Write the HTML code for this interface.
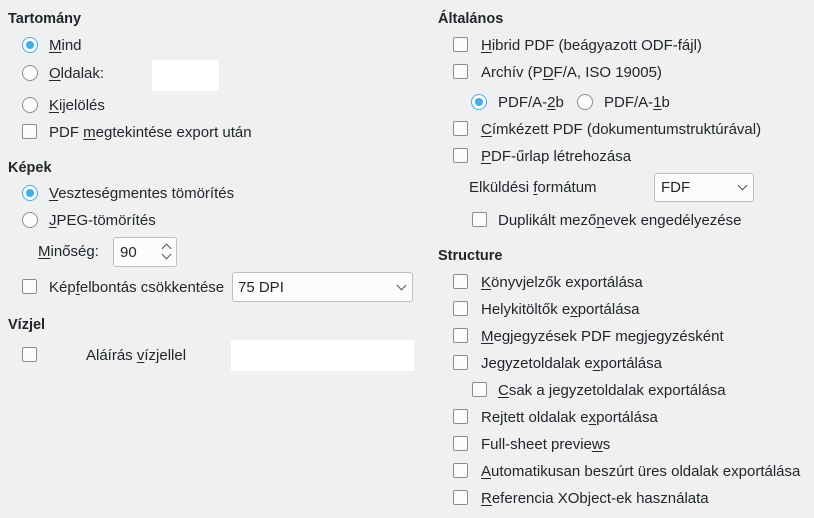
<!DOCTYPE html>
<html><head><meta charset="utf-8"><style>
body{margin:0;width:814px;height:518px;background:#eff0f1;font-family:"Liberation Sans","DejaVu Sans",sans-serif;font-size:15px;color:#232629;position:relative;overflow:hidden}
.a{position:absolute;white-space:nowrap;line-height:18px;margin-top:1px}
.h{font-weight:bold;font-size:14.5px}
u{text-decoration:underline;text-underline-offset:2px}
.cb{position:absolute;width:13px;height:13px;border:1px solid #8a8d90;border-radius:2px;background:#fcfcfc}
.rb{position:absolute;width:14px;height:14px;border:1px solid #8a8d90;border-radius:50%;background:#fcfcfc}
.rb.on{border-color:#3daee9;background:#fff}
.rb.on::after{content:"";position:absolute;left:3px;top:3px;width:8px;height:8px;border-radius:50%;background:#3daee9}
.box{position:absolute;background:#fff}
.combo{position:absolute;background:#fcfcfc;border:1px solid #bcbebf;border-radius:3px;box-sizing:border-box}
.chev{position:absolute;width:6px;height:6px;border-right:1.3px solid #555;border-bottom:1.3px solid #555;transform:rotate(45deg)}
</style></head><body>
<div class="a h" style="left:8px;top:9px">Tartomány</div>
<div class="rb on" style="left:22px;top:37px"></div><div class="a" style="left:49px;top:36px"><u>M</u>ind</div>
<div class="rb" style="left:22px;top:65px"></div><div class="a" style="left:49px;top:64px"><u>O</u>ldalak:</div>
<div class="box" style="left:152px;top:60px;width:67px;height:31px"></div>
<div class="rb" style="left:22px;top:97px"></div><div class="a" style="left:49px;top:96px"><u>K</u>ijelölés</div>
<div class="cb" style="left:22px;top:124px"></div><div class="a" style="left:49px;top:123px">PDF <u>m</u>egtekintése export után</div>

<div class="a h" style="left:8px;top:158px">Képek</div>
<div class="rb on" style="left:22px;top:185px"></div><div class="a" style="left:49px;top:184px"><u>V</u>eszteségmentes tömörítés</div>
<div class="rb" style="left:22px;top:212px"></div><div class="a" style="left:49px;top:211px"><u>J</u>PEG-tömörítés</div>
<div class="a" style="left:38px;top:242px"><u>M</u>inőség:</div>
<div class="combo" style="left:113px;top:237px;width:64px;height:30px"></div>
<div class="a" style="left:120px;top:243px">90</div>
<div class="chev" style="left:163px;top:245px;transform:rotate(225deg)"></div>
<div class="chev" style="left:163px;top:251px"></div>
<div class="cb" style="left:22px;top:279px"></div><div class="a" style="left:49px;top:278px">Kép<u>f</u>elbontás csökkentése</div>
<div class="combo" style="left:232px;top:272px;width:181px;height:30px"></div>
<div class="a" style="left:238px;top:278px">75 DPI</div>
<div class="chev" style="left:398px;top:282px"></div>

<div class="a h" style="left:8px;top:315px">Vízjel</div>
<div class="cb" style="left:22px;top:347px"></div><div class="a" style="left:86px;top:346px">Aláírás <u>v</u>ízjellel</div>
<div class="box" style="left:231px;top:340px;width:183px;height:31px"></div>

<div class="a h" style="left:438px;top:9px">Általános</div>
<div class="cb" style="left:453px;top:37px"></div><div class="a" style="left:481px;top:36px"><u>H</u>ibrid PDF (beágyazott ODF-fájl)</div>
<div class="cb" style="left:453px;top:64px"></div><div class="a" style="left:481px;top:63px">Archív (P<u>D</u>F/A, ISO 19005)</div>
<div class="rb on" style="left:471px;top:94px"></div><div class="a" style="left:498px;top:93px">PDF/A-<u>2</u>b</div>
<div class="rb" style="left:577px;top:94px"></div><div class="a" style="left:604px;top:93px">PDF/A-<u>1</u>b</div>
<div class="cb" style="left:453px;top:121px"></div><div class="a" style="left:481px;top:120px"><u>C</u>ímkézett PDF (dokumentumstruktúrával)</div>
<div class="cb" style="left:453px;top:148px"></div><div class="a" style="left:481px;top:147px"><u>P</u>DF-űrlap létrehozása</div>
<div class="a" style="left:469px;top:178px">Elküldési <u>f</u>ormátum</div>
<div class="combo" style="left:654px;top:173px;width:100px;height:29px"></div>
<div class="a" style="left:661px;top:178px">FDF</div>
<div class="chev" style="left:739px;top:182px"></div>
<div class="cb" style="left:472px;top:212px"></div><div class="a" style="left:498px;top:211px">Duplikált mező<u>n</u>evek engedélyezése</div>

<div class="a h" style="left:438px;top:246px">Structure</div>
<div class="cb" style="left:453px;top:274px"></div><div class="a" style="left:481px;top:273px"><u>K</u>önyvjelzők exportálása</div>
<div class="cb" style="left:453px;top:301px"></div><div class="a" style="left:481px;top:300px">Helykitöltők e<u>x</u>portálása</div>
<div class="cb" style="left:453px;top:328px"></div><div class="a" style="left:481px;top:327px"><u>M</u>egjegyzések PDF megjegyzésként</div>
<div class="cb" style="left:453px;top:355px"></div><div class="a" style="left:481px;top:354px">Jegyzetoldalak e<u>x</u>portálása</div>
<div class="cb" style="left:472px;top:382px"></div><div class="a" style="left:498px;top:381px"><u>C</u>sak a jegyzetoldalak exportálása</div>
<div class="cb" style="left:453px;top:409px"></div><div class="a" style="left:481px;top:408px">Rejtett oldalak e<u>x</u>portálása</div>
<div class="cb" style="left:453px;top:436px"></div><div class="a" style="left:481px;top:435px">Full-sheet previe<u>w</u>s</div>
<div class="cb" style="left:453px;top:463px"></div><div class="a" style="left:481px;top:462px"><u>A</u>utomatikusan beszúrt üres oldalak exportálása</div>
<div class="cb" style="left:453px;top:490px"></div><div class="a" style="left:481px;top:489px"><u>R</u>eferencia XObject-ek használata</div>
</body></html>
